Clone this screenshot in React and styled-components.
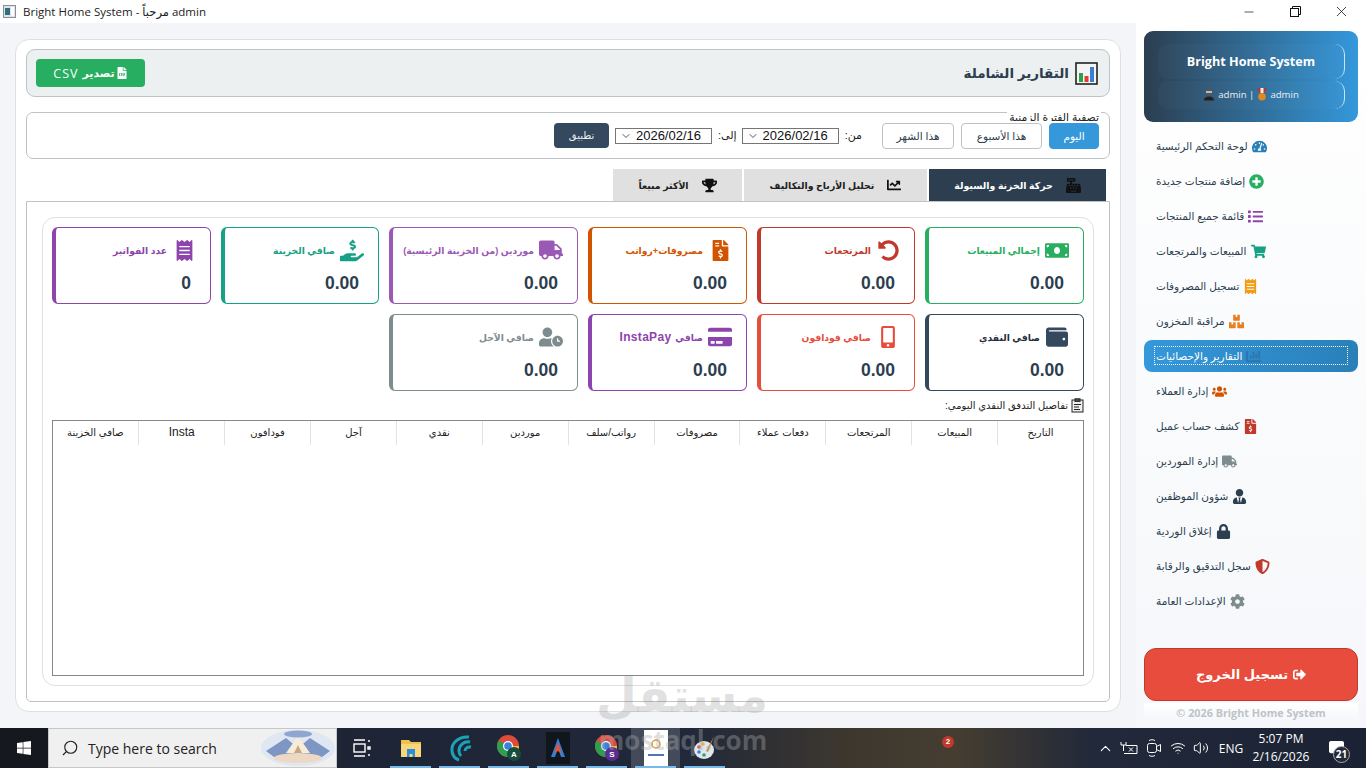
import styled, { createGlobalStyle } from 'styled-components';
import {
  FaTachometerAlt, FaPlusCircle, FaList, FaShoppingCart, FaReceipt, FaBoxes, FaChartBar, FaUsers,
  FaFileInvoiceDollar, FaTruck, FaUserTie, FaLock, FaShieldAlt, FaCog, FaSignOutAlt, FaMoneyBill,
  FaUndoAlt, FaHandHoldingUsd, FaWallet, FaMobileAlt, FaCreditCard, FaUserClock, FaCashRegister,
  FaChartLine, FaTrophy, FaFileCsv, FaWindows, FaCommentAlt,
} from 'react-icons/fa';
import { ChevronDown, ChevronUp, Minus, X, Search, Wifi, Volume2 } from 'lucide-react';

const AR = `"Liberation Sans", "DejaVu Sans", sans-serif`;
const UI = `"Open Sans", "Noto Sans", "DejaVu Sans", sans-serif`;

const Global = createGlobalStyle`
  html, body { margin: 0; padding: 0; height: 768px; overflow: hidden; background: #f3f5f9; }
  * { box-sizing: border-box; }
  body { font-family: ${AR}; color: #2c3e50; }
`;

const Screen = styled.div`
  width: 1366px;
  height: 768px;
  display: flex;
  flex-direction: column;
  position: relative;
  overflow: hidden;
`;

const TitleBar = styled.div`
  height: 23px;
  background: #fff;
  display: flex;
  align-items: center;
  padding-left: 3px;
  font: 11.5px ${UI};
  color: #222;
`;
const TitleText = styled.span`
  margin-left: 7px;
  flex: 1;
`;
const WinBtn = styled.div`
  width: 46px;
  display: flex;
  justify-content: center;
  color: #111;
  position: relative;
  left: -2px;
`;

const Body = styled.div`
  flex: 1;
  display: flex;
  min-height: 0;
`;

const MainPanel = styled.main`
  width: 1106px;
  margin: 16px 15px 16px 15px;
  padding: 9px 10px 9px 10px;
  background: #fff;
  border: 1px solid #e0e0e0;
  border-radius: 14px;
  display: flex;
  flex-direction: column;
  direction: rtl;
`;

const HeaderBar = styled.header`
  height: 48px;
  flex: none;
  background: #ecf0f1;
  border: 1px solid #bdc3c7;
  border-radius: 9px;
  display: flex;
  align-items: center;
  justify-content: space-between;
  padding: 0 11px 0 9px;
`;
const PageTitle = styled.h1`
  margin: 0;
  display: flex;
  align-items: center;
  gap: 6px;
  font: bold 13.5px ${AR};
  color: #2c3e50;
`;
const ExportButton = styled.button`
  width: 109px;
  height: 28px;
  border: 0;
  border-radius: 4px;
  background: #27ae60;
  color: #fff;
  font: bold 11px ${AR};
  display: flex;
  align-items: center;
  justify-content: center;
  gap: 1px;
  padding: 0;
`;
const ExportLabel = styled.span`
  display: flex;
  align-items: center;
  gap: 4px;
`;
const ExportLatin = styled.span`
  font: 12.5px ${UI};
  letter-spacing: 1px;
`;

const FilterBox = styled.section`
  height: 47px;
  flex: none;
  margin-top: 15px;
  border: 1px solid #bdc3c7;
  border-radius: 7px;
  position: relative;
  display: flex;
  align-items: center;
  padding: 0 10px 0 0;
`;
const FilterLegend = styled.span`
  position: absolute;
  top: -2px;
  right: 8px;
  height: 10px;
  overflow: hidden;
  padding: 0 2px;
  background: #fff;
  font: 10.8px/13px ${AR};
  color: #222;
`;
const RangeButton = styled.button`
  position: relative;
  height: 26px;
  width: ${p => p.$w}px;
  margin-left: 7px;
  padding: 0;
  border: 1px solid ${p => (p.$on ? '#3498db' : '#bdc3c7')};
  border-radius: 4px;
  background: ${p => (p.$on ? '#3498db' : '#fff')};
  color: ${p => (p.$on ? '#fff' : '#2c3e50')};
  font: 10.5px ${AR};
`;
const FieldLabel = styled.span`
  font: 11px ${AR};
  color: #222;
  margin: ${p => p.$m};
`;
const DateField = styled.div`
  width: 97px;
  height: 16px;
  border: 1px solid #767676;
  display: flex;
  align-items: center;
  justify-content: space-between;
  padding: 0 10px 0 4px;
  direction: ltr;
  font: 13px ${AR};
  color: #111;
  & > svg { flex: none; }
`;
const ApplyButton = styled.button`
  width: 55px;
  height: 25px;
  margin-right: 6px;
  border: 0;
  border-radius: 4px;
  background: #34495e;
  color: #ecf0f1;
  font: 10px ${AR};
  padding: 0;
`;

const TabRow = styled.nav`
  height: 32px;
  flex: none;
  margin-top: 10px;
  padding-right: 4px;
  display: flex;
  gap: 2px;
`;
const Tab = styled.div`
  width: ${p => p.$w}px;
  background: ${p => (p.$on ? '#2c3e50' : '#e0e0e0')};
  color: ${p => (p.$on ? '#fff' : '#222')};
  font: bold 9.4px ${AR};
  display: flex;
  align-items: center;
  justify-content: center;
  gap: 13px;
  & > svg { color: #111; flex: none; }
`;

const TabPane = styled.section`
  flex: 1;
  border: 1px solid #bdc3c7;
  border-radius: 0 0 5px 5px;
  padding: 15px;
  display: flex;
  min-height: 0;
`;
const InnerGroup = styled.div`
  flex: 1;
  min-width: 0;
  border: 1px solid #e0e0e0;
  border-radius: 13px;
  padding: 9px;
  display: flex;
  flex-direction: column;
`;
const CardGrid = styled.div`
  display: grid;
  grid-template-columns: 159px 158px 159px 189px 158px 159px;
  grid-auto-rows: 77px;
  gap: 10px;
`;
const Card = styled.div`
  direction: rtl;
  background: #fff;
  border: 1px solid ${p => p.$c};
  border-left-width: 4px;
  border-radius: 6px;
  padding: 10px 14px 0 0;
  color: ${p => p.$c};
`;
const CardHead = styled.div`
  display: flex;
  align-items: center;
  gap: 5px;
  height: 24px;
  font: bold 9.2px ${AR};
  white-space: nowrap;
  color: ${p => p.$t || 'inherit'};
`;
const CardIcon = styled.span`
  width: 24px;
  display: flex;
  justify-content: center;
  flex: none;
`;
const CardLatin = styled.span`
  font-size: 12px;
  margin-right: 4px;
  letter-spacing: .3px;
`;
const CardValue = styled.div`
  margin: 10px 5px 0 0;
  font: bold 17.5px/22px ${AR};
  color: #2c3e50;
  text-align: right;
`;

const SectionTitle = styled.div`
  height: 29px;
  display: flex;
  align-items: center;
  gap: 3px;
  font: 10px ${AR};
  color: #222;
`;
const DataTable = styled.div`
  flex: 1;
  min-width: 0;
  border: 1px solid #888;
`;
const TableHead = styled.div`
  display: grid;
  grid-template-columns: repeat(12, 85.9px);
  height: 24px;
`;
const HeadCell = styled.div`
  display: flex;
  align-items: center;
  justify-content: center;
  font: 10px ${AR};
  color: #222;
  border-left: 1px solid #e3e3e3;
  padding-bottom: 2px;
  &:last-child { border-left: 0; }
`;
const LatinCell = styled(HeadCell)`
  font-size: 12px;
`;

const Sidebar = styled.aside`
  width: 230px;
  margin-left: 0;
  padding: 8px 8px 8px 8px;
  background: linear-gradient(180deg, #ffffff 0%, #f5f7fa 100%);
  display: flex;
  flex-direction: column;
`;
const Brand = styled.div`
  height: 91px;
  flex: none;
  border-radius: 9px;
  background: linear-gradient(90deg, #2c3e50, #3498db);
  padding: 13px 13px 13px 14px;
  display: flex;
  flex-direction: column;
  gap: 2px;
  color: #fff;
`;
const BrandRow = styled.div`
  flex: ${p => p.$f};
  border-radius: 10px;
  background: rgba(255, 255, 255, 0.025);
  border-right: 1px solid rgba(255, 255, 255, 0.75);
  display: flex;
  align-items: center;
  justify-content: center;
  gap: 3px;
  font: ${p => (p.$big ? `bold 12.6px ${UI}` : `9.6px ${UI}`)};
  color: ${p => (p.$big ? '#fff' : '#ecf0f1')};
`;
const NavList = styled.nav`
  margin-top: 8px;
  display: flex;
  flex-direction: column;
  gap: 3px;
`;
const NavItem = styled.div`
  position: relative;
  height: 32px;
  border-radius: 8px;
  padding-left: 12px;
  display: flex;
  align-items: center;
  gap: 4px;
  font: 10.5px ${AR};
  color: ${p => (p.$on ? '#fff' : '#2c3e50')};
  background: ${p => (p.$on ? 'linear-gradient(90deg, #3498db, #2980b9)' : 'transparent')};
  & > svg { color: ${p => p.$c}; flex: none; }
  ${p => p.$on && `
    &::after {
      content: '';
      position: absolute;
      inset: 6px 10px 7px 10px;
      border: 1px dotted #fff;
    }
  `}
`;
const Logout = styled.button`
  margin-top: auto;
  height: 53px;
  flex: none;
  border: 1px solid #c0392b;
  border-radius: 12px;
  background: #e74c3c;
  color: #fff;
  font: bold 13px ${AR};
  display: flex;
  align-items: center;
  justify-content: center;
  gap: 5px;
  padding: 0;
`;
const Copyright = styled.div`
  height: 17px;
  margin-top: 2px;
  text-align: center;
  font: bold 10.8px/20px ${UI};
  color: #bdc3c7;
  background: linear-gradient(180deg, #fff, #f5f7fa);
`;

const Taskbar = styled.footer`
  height: 40px;
  flex: none;
  display: flex;
  align-items: center;
  color: #fff;
  background: linear-gradient(90deg, #1b2130 0%, #20283a 50%, #3d372e 62%, #453d30 70%, #22293a 80%, #1a2233 100%);
`;
const StartBtn = styled.div`
  width: 48px;
  height: 40px;
  background: #16181f;
  display: flex;
  align-items: center;
  justify-content: center;
`;
const SearchBox = styled.div`
  width: 289px;
  height: 40px;
  background: #f0f0f0;
  border: 1px solid #c8c8c8;
  display: flex;
  align-items: center;
  padding-left: 12px;
  color: #222;
  font: 14px ${UI};
  & > svg:first-child { transform: scaleX(-1); }
`;
const SearchText = styled.span`
  margin-left: 9px;
  flex: 1;
`;
const TaskSlot = styled.div`
  width: 49px;
  height: 40px;
  position: relative;
  display: flex;
  align-items: center;
  justify-content: center;
  background: ${p => (p.$hi ? 'rgba(255,255,255,.16)' : 'transparent')};
  ${p => p.$open && `
    &::after {
      content: '';
      position: absolute;
      left: 4px; right: 4px; bottom: 0;
      height: 2px;
      background: #76b9ed;
    }
  `}
`;
const TaskGroup = styled.div`
  display: flex;
`;
const RedBadge = styled.span`
  position: absolute;
  left: 942px;
  top: 736px;
  width: 12px;
  height: 12px;
  border-radius: 50%;
  background: #c0392b;
  color: #fff;
  font: bold 8px/12px ${AR};
  text-align: center;
`;
const Tray = styled.div`
  margin-left: auto;
  display: flex;
  align-items: center;
  height: 40px;
  font: 12px ${UI};
  color: #fff;
`;
const TrayIcon = styled.span`
  width: ${p => p.$w}px;
  margin-left: ${p => p.$m || 0}px;
  display: flex;
  justify-content: center;
`;
const Clock = styled.div`
  width: 62px;
  margin-left: 7px;
  text-align: center;
  font: 12px/18px ${UI};
  white-space: nowrap;
`;
const Notify = styled.div`
  width: 40px;
  margin: 0 10px 0 4px;
  position: relative;
  display: flex;
  justify-content: center;
`;
const NotifyCount = styled.span`
  position: absolute;
  left: 17px;
  top: 5px;
  width: 17px;
  height: 17px;
  border-radius: 50%;
  background: #222a3a;
  border: 1px solid #aaa;
  font: bold 10px/15px ${UI};
  text-align: center;
`;

const Watermark = styled.div`
  position: absolute;
  left: 598px;
  top: 666px;
  width: 170px;
  pointer-events: none;
  text-align: center;
`;
const WatermarkAr = styled.div`
  font: bold 47px/60px ${AR};
  direction: rtl;
  color: rgba(120, 120, 120, 0.22);
`;
const WatermarkEn = styled.div`
  font: bold 26px/28px ${UI};
  color: rgba(170, 170, 170, 0.38);
`;

const cards = [
  { label: 'إجمالي المبيعات', value: '0.00', color: '#27ae60', Icon: FaMoneyBill, size: 25 },
  { label: 'المرتجعات', value: '0.00', color: '#c0392b', Icon: FaUndoAlt, size: 21 },
  { label: 'مصروفات+رواتب', value: '0.00', color: '#d35400', Icon: FaFileInvoiceDollar, size: 21 },
  { label: 'موردين (من الخزينة الرئيسية)', value: '0.00', color: '#9b59b6', Icon: FaTruck, size: 24 },
  { label: 'صافي الخزينة', value: '0.00', color: '#16a085', Icon: FaHandHoldingUsd, size: 25 },
  { label: 'عدد الفواتير', value: '0', color: '#8e44ad', Icon: FaReceipt, size: 21 },
  { label: 'صافي النقدي', value: '0.00', color: '#34495e', Icon: FaWallet, size: 22, text: '#1f2d3d' },
  { label: 'صافي فودافون', value: '0.00', color: '#e74c3c', Icon: FaMobileAlt, size: 22 },
  { label: 'صافي', latin: 'InstaPay', value: '0.00', color: '#8e44ad', Icon: FaCreditCard, size: 24 },
  { label: 'صافي الآجل', value: '0.00', color: '#7f8c8d', Icon: FaUserClock, size: 24 },
];

const nav = [
  ['لوحة التحكم الرئيسية', FaTachometerAlt, '#2980b9'],
  ['إضافة منتجات جديدة', FaPlusCircle, '#27ae60'],
  ['قائمة جميع المنتجات', FaList, '#8e44ad'],
  ['المبيعات والمرتجعات', FaShoppingCart, '#16a085'],
  ['تسجيل المصروفات', FaReceipt, '#f39c12'],
  ['مراقبة المخزون', FaBoxes, '#e67e22'],
  ['التقارير والإحصائيات', FaChartBar, '#2c75ad'],
  ['إدارة العملاء', FaUsers, '#d35400'],
  ['كشف حساب عميل', FaFileInvoiceDollar, '#c0392b'],
  ['إدارة الموردين', FaTruck, '#7f8c8d'],
  ['شؤون الموظفين', FaUserTie, '#2c3e50'],
  ['إغلاق الوردية', FaLock, '#2c3e50'],
  ['سجل التدقيق والرقابة', FaShieldAlt, '#c0392b'],
  ['الإعدادات العامة', FaCog, '#7f8c8d'],
];

const columns = ['التاريخ', 'المبيعات', 'المرتجعات', 'دفعات عملاء', 'مصروفات', 'رواتب/سلف', 'موردين', 'نقدي', 'آجل', 'فودافون', 'Insta', 'صافي الخزينة'];

function AppGlyph() {
  return (
    <svg width="13" height="13" viewBox="0 0 13 13">
      <rect x=".5" y=".5" width="12" height="12" fill="#dfe3e8" stroke="#8a8f96" />
      <rect x="2" y="3" width="5" height="7" fill="#2d6f7f" />
      <rect x="8" y="2" width="3" height="9" fill="#fff" />
    </svg>
  );
}

function RestoreGlyph() {
  return (
    <svg width="11" height="11" viewBox="0 0 11 11" fill="none" stroke="#111">
      <rect x=".5" y="2.5" width="8" height="8" />
      <path d="M2.5 2.5v-2h8v8h-2" />
    </svg>
  );
}

function ReportGlyph() {
  return (
    <svg width="23" height="23" viewBox="0 0 23 23">
      <rect x="1" y="1" width="21" height="21" fill="#f4f4f4" stroke="#222" strokeWidth="1.6" />
      <rect x="4" y="11" width="4" height="9" fill="#2e9e4f" />
      <rect x="9.5" y="14" width="4" height="6" fill="#e03e2d" />
      <rect x="15" y="5" width="4" height="15" fill="#3a7fd5" />
    </svg>
  );
}

function ClipboardGlyph() {
  return (
    <svg width="13" height="15" viewBox="0 0 13 15" fill="none" stroke="#222">
      <rect x="1" y="2" width="11" height="12" fill="#eee" />
      <rect x="4" y=".8" width="5" height="2.6" fill="#555" />
      <path d="M3 6.5h7M3 9h5M3 11.5h6" />
    </svg>
  );
}

function UserGlyph() {
  return (
    <svg width="12" height="13" viewBox="0 0 12 13">
      <circle cx="6" cy="4" r="3.4" fill="#555" />
      <path d="M1 12.5c0-3 2.2-4 5-4s5 1 5 4z" fill="#222" />
      <rect x="3" y="3.2" width="6" height="1.6" fill="#d5d5d5" />
    </svg>
  );
}

function MedalGlyph() {
  return (
    <svg width="10" height="13" viewBox="0 0 10 13">
      <path d="M0 0h10L7 6H3z" fill="#b23a2c" />
      <path d="M3.5 0h3v5h-3z" fill="#eee" />
      <circle cx="5" cy="8.8" r="3.8" fill="#e08a1e" />
    </svg>
  );
}

function TaskViewGlyph() {
  return (
    <svg width="18" height="20" viewBox="0 0 18 20" fill="none" stroke="#fff" strokeWidth="1.4">
      <rect x="1" y="6" width="11" height="8" />
      <path d="M1 2h11M1 18h11M15 3h2M15 9h2v2h-2zM15 17h2" />
    </svg>
  );
}

function FolderGlyph() {
  return (
    <svg width="22" height="20" viewBox="0 0 22 20">
      <path d="M1 2h8l2 2h10v15H1z" fill="#f3c04f" />
      <path d="M1 6h20v13H1z" fill="#f7d77c" />
      <path d="M7 11h8v8h-2.5v-3h-3v3H7z" fill="#2a8fd8" />
    </svg>
  );
}

function WaveGlyph() {
  return (
    <svg width="26" height="28" viewBox="0 0 26 28" fill="none" stroke="#1aa3b8" strokeWidth="3">
      <path d="M22 3C12 2 4 9 5 17c.6 5 4 8 7 9" />
      <path d="M23 8c-6-1-11 3-11 9 0 2 1 4 2 5" />
      <path d="M24 13c-3-.5-6 1-6 4" />
    </svg>
  );
}

function ChromeGlyph({ letter, badge }) {
  return (
    <svg width="26" height="28" viewBox="0 0 26 28">
      <circle cx="12" cy="12" r="11" fill="#e04a3a" />
      <path d="M12 12 2.5 6.5A11 11 0 0 0 12 23z" fill="#2e9e4f" />
      <path d="M12 12h11a11 11 0 0 1-11 11z" fill="#f6c02c" />
      <circle cx="12" cy="12" r="5" fill="#fff" />
      <circle cx="12" cy="12" r="3.8" fill="#3b82e0" />
      <circle cx="18" cy="20" r="7" fill={badge} />
      <text x="18" y="23" textAnchor="middle" fontSize="8" fontWeight="700" fill="#fff" fontFamily="Liberation Sans">{letter}</text>
    </svg>
  );
}

function ArrowGlyph() {
  return (
    <svg width="24" height="32" viewBox="0 0 24 32">
      <rect width="24" height="32" fill="#11151c" />
      <path d="M12 6 19 25h-4l-3-9-3 9H5z" fill="#2f7fe0" />
      <path d="M12 10 16 22l-4-3-4 3z" fill="#e0563a" />
    </svg>
  );
}

function DocThumb() {
  return (
    <svg width="24" height="36" viewBox="0 0 24 36">
      <rect width="24" height="36" fill="#fff" />
      <circle cx="12" cy="14" r="4" fill="none" stroke="#e39a3b" strokeWidth="1.5" />
      <rect x="4" y="24" width="16" height="2" fill="#4b78b5" />
    </svg>
  );
}

function PaletteGlyph() {
  return (
    <svg width="24" height="26" viewBox="0 0 24 26">
      <ellipse cx="11" cy="15" rx="10" ry="9" fill="#dfe7ef" />
      <circle cx="6" cy="12" r="1.8" fill="#e2533f" />
      <circle cx="10" cy="9" r="1.8" fill="#f0b429" />
      <circle cx="6" cy="17" r="1.8" fill="#3b82e0" />
      <circle cx="11" cy="20" r="1.8" fill="#37a05a" />
      <path d="M21 1 13 16l2 1z" fill="#c98a3c" />
    </svg>
  );
}

function MountainPicture() {
  return (
    <svg width="76" height="38" viewBox="0 0 76 38">
      <ellipse cx="38" cy="19" rx="37" ry="18" fill="#dfe7f3" />
      <path d="M6 22 26 9l12 10L50 9l20 13-8 6H14z" fill="#7e96c4" />
      <path d="M26 24 38 7l12 17z" fill="#f7ecd8" />
      <path d="M34 24 38 16l4 8z" fill="#c8a684" />
      <ellipse cx="38" cy="29" rx="24" ry="5" fill="#edd8c4" />
      <ellipse cx="38" cy="5" rx="14" ry="3.5" fill="#8fa6d0" />
    </svg>
  );
}

function PlugGlyph() {
  return (
    <svg width="18" height="14" viewBox="0 0 18 14" fill="none" stroke="#fff">
      <path d="M1 1v3h5V1M3.5 4v6M6 4.5h11v8H4" />
      <path d="M9 6.5l4 4M13 6.5l-4 4" />
    </svg>
  );
}

function MeetGlyph() {
  return (
    <svg width="16" height="20" viewBox="0 0 16 20" fill="none" stroke="#fff">
      <rect x="1.5" y="5.5" width="9" height="9" rx="2" />
      <path d="M10.5 8.5 14.5 6.5v7l-4-2M3 2.5c2-1 4-1 6 0M3 17.5c2 1 4 1 6 0" />
    </svg>
  );
}

export default function App() {
  return (
    <Screen>
      <Global />
      <TitleBar>
        <AppGlyph />
        <TitleText>Bright Home System - مرحباً admin</TitleText>
        <WinBtn><Minus size={14} strokeWidth={1.2} /></WinBtn>
        <WinBtn><RestoreGlyph /></WinBtn>
        <WinBtn><X size={17} strokeWidth={1.1} /></WinBtn>
      </TitleBar>

      <Body>
        <MainPanel>
          <HeaderBar>
            <PageTitle><ReportGlyph />التقارير الشاملة</PageTitle>
            <ExportButton>
              <FaFileCsv size={12} />
              <ExportLabel>تصدير <ExportLatin>CSV</ExportLatin></ExportLabel>
            </ExportButton>
          </HeaderBar>

          <FilterBox>
            <FilterLegend>تصفية الفترة الزمنية</FilterLegend>
            <RangeButton $w={50} $on>اليوم</RangeButton>
            <RangeButton $w={81}>هذا الأسبوع</RangeButton>
            <RangeButton $w={72}>هذا الشهر</RangeButton>
            <FieldLabel $m="0 13px 0 6px">من:</FieldLabel>
            <DateField><ChevronDown size={12} strokeWidth={1.4} />2026/02/16</DateField>
            <FieldLabel $m="0 5px 0 6px">إلى:</FieldLabel>
            <DateField><ChevronDown size={12} strokeWidth={1.4} />2026/02/16</DateField>
            <ApplyButton>تطبيق</ApplyButton>
          </FilterBox>

          <TabRow>
            <Tab $w={177} $on><FaCashRegister size={15} />حركة الخزنة والسيولة</Tab>
            <Tab $w={183}><FaChartLine size={14} />تحليل الأرباح والتكاليف</Tab>
            <Tab $w={129}><FaTrophy size={15} />الأكثر مبيعاً</Tab>
          </TabRow>

          <TabPane>
            <InnerGroup>
              <CardGrid>
                {cards.map(({ label, latin, value, color, Icon, size, text }) => (
                  <Card key={label + (latin || '')} $c={color}>
                    <CardHead $t={text}>
                      <CardIcon><Icon size={size} color={color} /></CardIcon>
                      <span>{label}{latin && <CardLatin>{latin}</CardLatin>}</span>
                    </CardHead>
                    <CardValue>{value}</CardValue>
                  </Card>
                ))}
              </CardGrid>

              <SectionTitle><ClipboardGlyph />تفاصيل التدفق النقدي اليومي:</SectionTitle>

              <DataTable>
                <TableHead>
                  {columns.map(c => (c === 'Insta'
                    ? <LatinCell key={c}>{c}</LatinCell>
                    : <HeadCell key={c}>{c}</HeadCell>))}
                </TableHead>
              </DataTable>
            </InnerGroup>
          </TabPane>
        </MainPanel>

        <Sidebar>
          <Brand>
            <BrandRow $f={34} $big>Bright Home System</BrandRow>
            <BrandRow $f={28}><UserGlyph /> admin | <MedalGlyph /> admin</BrandRow>
          </Brand>
          <NavList>
            {nav.map(([label, Icon, color]) => (
              <NavItem key={label} $c={color} $on={label === 'التقارير والإحصائيات'}>
                <span dir="rtl">{label}</span>
                <Icon size={15} />
              </NavItem>
            ))}
          </NavList>
          <Logout><span dir="rtl">تسجيل الخروج</span><FaSignOutAlt size={13} /></Logout>
          <Copyright>© 2026 Bright Home System</Copyright>
        </Sidebar>
      </Body>

      <Taskbar>
        <StartBtn><FaWindows size={16} /></StartBtn>
        <SearchBox>
          <Search size={18} strokeWidth={1.5} />
          <SearchText>Type here to search</SearchText>
          <MountainPicture />
        </SearchBox>
        <TaskGroup>
          <TaskSlot><TaskViewGlyph /></TaskSlot>
          <TaskSlot $open><FolderGlyph /></TaskSlot>
          <TaskSlot $open><WaveGlyph /></TaskSlot>
          <TaskSlot $open><ChromeGlyph letter="A" badge="#174d3c" /></TaskSlot>
          <TaskSlot $open><ArrowGlyph /></TaskSlot>
          <TaskSlot $open><ChromeGlyph letter="S" badge="#5b2d91" /></TaskSlot>
          <TaskSlot $open $hi><DocThumb /></TaskSlot>
          <TaskSlot $open><PaletteGlyph /></TaskSlot>
        </TaskGroup>
        <RedBadge>2</RedBadge>
        <Tray>
          <TrayIcon $w={22}><ChevronUp size={17} strokeWidth={1.5} /></TrayIcon>
          <TrayIcon $w={26}><PlugGlyph /></TrayIcon>
          <TrayIcon $w={24}><MeetGlyph /></TrayIcon>
          <TrayIcon $w={24}><Wifi size={16} strokeWidth={1.5} /></TrayIcon>
          <TrayIcon $w={22}><Volume2 size={16} strokeWidth={1.5} /></TrayIcon>
          <TrayIcon $w={24} $m={7}>ENG</TrayIcon>
          <Clock>5:07 PM<br />2/16/2026</Clock>
          <Notify>
            <FaCommentAlt size={15} />
            <NotifyCount>21</NotifyCount>
          </Notify>
        </Tray>
      </Taskbar>

      <Watermark>
        <WatermarkAr>مستقل</WatermarkAr>
        <WatermarkEn>mostaql.com</WatermarkEn>
      </Watermark>
    </Screen>
  );
}
